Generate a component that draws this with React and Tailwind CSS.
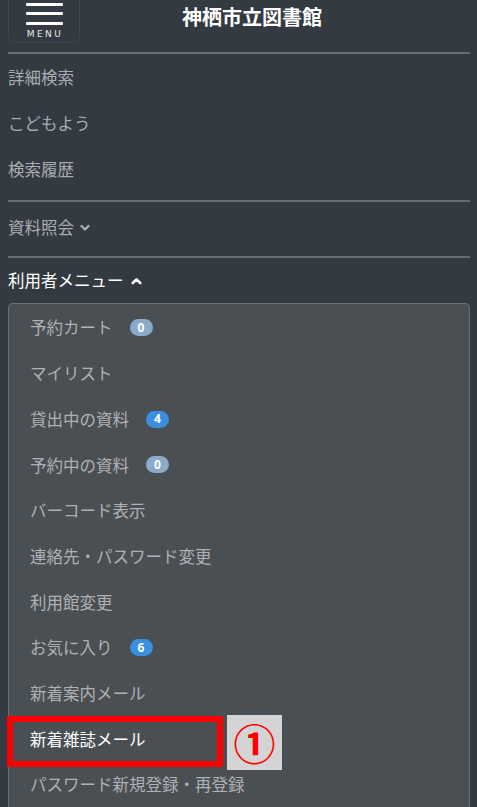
import React from "react";

const font = { fontFamily: '"Noto Sans CJK JP", "Noto Sans", sans-serif' };

function Badge({ n, color }) {
  return (
    <span
      className={`ml-[17px] inline-flex h-[17px] w-[23px] items-center justify-center rounded-full text-[12px] font-bold leading-none text-white ${color}`}
      style={{ fontFamily: '"Open Sans", "Liberation Sans", sans-serif' }}
    >
      {n}
    </span>
  );
}

function ChevronDown() {
  return (
    <svg width="10" height="8" viewBox="0 0 10 8" className="ml-[6px] mt-[1px]">
      <path d="M1.5 2 L5 5.5 L8.5 2" fill="none" stroke="#a9adb1" strokeWidth="2.4" strokeLinecap="round" strokeLinejoin="round" />
    </svg>
  );
}

function ChevronUp() {
  return (
    <svg width="11" height="8" viewBox="0 0 11 8" className="ml-[7px] mt-[1px]">
      <path d="M1.8 6 L5.5 2.3 L9.2 6" fill="none" stroke="#ffffff" strokeWidth="2.6" strokeLinecap="round" strokeLinejoin="round" />
    </svg>
  );
}

const inner = [
  { t: "予約カート", b: "0", c: "bg-[#8aabc9]" },
  { t: "マイリスト" },
  { t: "貸出中の資料", b: "4", c: "bg-[#3a8fe0]" },
  { t: "予約中の資料", b: "0", c: "bg-[#8aabc9]" },
  { t: "バーコード表示" },
  { t: "連絡先・パスワード変更" },
  { t: "利用館変更" },
  { t: "お気に入り", b: "6", c: "bg-[#3a8fe0]" },
  { t: "新着案内メール" },
  { t: "新着雑誌メール", active: true },
  { t: "パスワード新規登録・再登録" },
];

export default function App() {
  return (
    <div className="h-[807px] w-[477px] overflow-hidden bg-[#343a41]" style={font}>
      <div className="pl-[8px] pr-[7px]">
        {/* header */}
        <div className="flex h-[52px] items-start">
          <div className="relative -mt-[10px] flex h-[53px] w-[72px] flex-col items-center rounded-[6px] border border-[#41464d] pt-[12px]">
            <div className="h-[3px] w-[37px] rounded-[1px] bg-white" />
            <div className="mt-[6px] h-[3px] w-[37px] rounded-[1px] bg-white" />
            <div className="mt-[7px] h-[3px] w-[37px] rounded-[1px] bg-white" />
            <div
              className="mt-[4px] pl-[2px] text-[9px] leading-[10px] tracking-[2.4px] text-[#e6e6e6]"
              style={{ fontFamily: '"DejaVu Sans", "Liberation Sans", sans-serif' }}
            >
              MENU
            </div>
          </div>
          <div className="ml-[102px] mt-[4px] text-[20px] font-bold leading-[26px] text-white">
            神栖市立図書館
          </div>
        </div>
        <div className="h-[2px] bg-[#686d74]" />

        <div className="text-[16.5px] text-[#a9adb1]">
          <div className="flex h-[46px] items-center">詳細検索</div>
          <div className="flex h-[46px] items-center">こどもよう</div>
          <div className="flex h-[46px] items-center">検索履歴</div>
        </div>
        <div className="mt-[8px] h-[2px] bg-[#686d74]" />
        <div className="flex h-[54px] items-center pb-[3px] text-[16.5px] text-[#a9adb1]">
          資料照会
          <ChevronDown />
        </div>
        <div className="h-[2px] bg-[#686d74]" />
        <div className="flex h-[45px] items-center pb-[1px] text-[16.5px] text-white">
          利用者メニュー
          <ChevronUp />
        </div>

        {/* user menu box */}
        <div className="relative rounded-t-[5px] border border-b-0 border-[#6c7177] bg-[#4a4f54] pt-[1px] text-[16.5px] text-[#aeb1b5]">
          {inner.map((it) => (
            <div
              key={it.t}
              className={`flex h-[45.7px] items-center pl-[21px] ${it.active ? "text-white" : ""}`}
            >
              {it.t}
              {it.b && <Badge n={it.b} color={it.c} />}
            </div>
          ))}

          {/* annotation overlay */}
          <div className="absolute left-[-2px] top-[412px] h-[51px] w-[216px] border-[6px] border-[#ff0000]" />
          <div className="absolute left-[218px] top-[411px] flex h-[55px] w-[55px] items-center justify-center bg-[#d4d4d4] pb-[2px] text-[42px] font-bold leading-none text-[#ff0000]">
            ①
          </div>
        </div>
      </div>
    </div>
  );
}
